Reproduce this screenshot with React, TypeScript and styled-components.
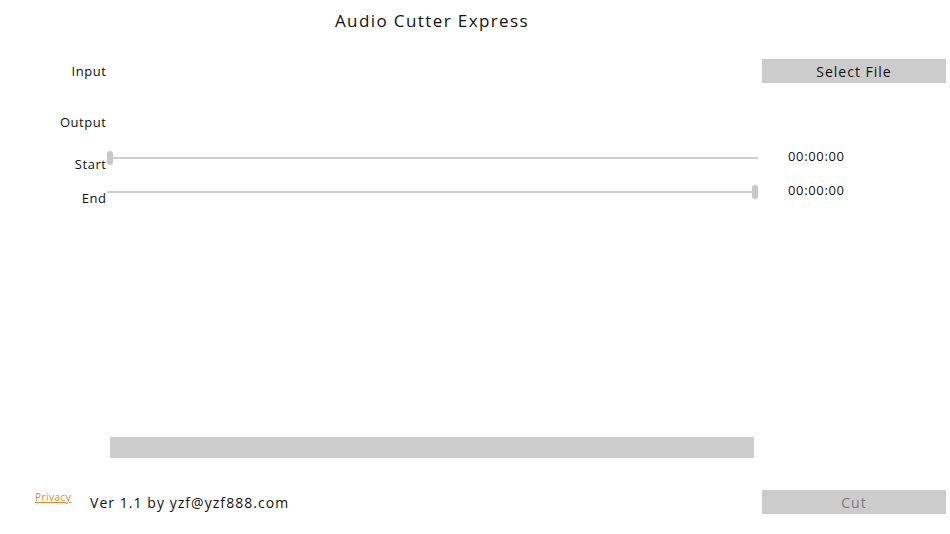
import React from "react";
import styled, { createGlobalStyle } from "styled-components";

const Global = createGlobalStyle`
  html, body { margin: 0; padding: 0; background: #ffffff; }
  body { font-family: "Open Sans", "Noto Sans", sans-serif; color: #111; }
`;

const Page = styled.div`
  width: 950px;
  height: 534px;
  display: flex;
  flex-direction: column;
  box-sizing: border-box;
  position: relative;
`;

const Title = styled.h1`
  margin: 0;
  height: 44px;
  line-height: 42px;
  text-align: center;
  font-size: 17px;
  font-weight: 400;
  letter-spacing: 1.4px;
  padding-right: 86px;
`;

const Form = styled.div`
  display: flex;
  flex-direction: column;
  margin-top: 15px;
`;

const Row = styled.div<{ $top?: number }>`
  display: grid;
  grid-template-columns: 106px 652px 188px;
  height: 24px;
  margin-top: ${(p) => p.$top ?? 0}px;
  align-items: center;
`;

const Label = styled.div<{ $drop?: number }>`
  text-align: right;
  font-size: 13px;
  line-height: 16px;
  letter-spacing: 0.55px;
  margin-right: -0.5px;
  transform: translateY(${(p) => p.$drop ?? 0}px);
`;

const Button = styled.button<{ $disabled?: boolean }>`
  grid-column: 3;
  margin-left: 4px;
  height: 24px;
  border: none;
  background: #cccccc;
  font-family: inherit;
  font-size: 14px;
  letter-spacing: 1px;
  color: ${(p) => (p.$disabled ? "#7a7a7a" : "#111")};
  padding: 0;
  cursor: default;
`;

const Slider = styled.div`
  position: relative;
  height: 24px;
  display: flex;
  align-items: center;
  margin-left: 1px;
`;

const Track = styled.div`
  flex: 1;
  height: 2px;
  background: #cfcfcf;
`;

const Thumb = styled.div<{ $pos: "start" | "end" }>`
  position: absolute;
  top: 5px;
  ${(p) => (p.$pos === "start" ? "left: 0px;" : "right: 0px;")}
  width: 6px;
  height: 14px;
  border-radius: 3px;
  background: #c8c8c8;
`;

const Time = styled.div`
  padding-left: 30px;
  font-size: 13px;
  letter-spacing: 0.65px;
  transform: translateY(-2px);
`;

const Spacer = styled.div`
  flex: 1;
`;

const Progress = styled.div`
  margin-left: 110px;
  width: 644px;
  height: 21px;
  background: #cccccc;
`;

const Footer = styled.div`
  display: flex;
  align-items: center;
  height: 24px;
  margin-top: 32px;
  margin-bottom: 20px;
  padding-left: 35px;
`;

const Privacy = styled.a`
  font-size: 10px;
  color: #d4892e;
  letter-spacing: 0.45px;
  text-decoration: underline;
  transform: translateY(-5px);
  width: 55px;
`;

const Version = styled.div`
  font-size: 14px;
  letter-spacing: 1.05px;
  flex: 1;
`;

const CutButton = styled(Button)`
  width: 184px;
  margin-right: 4px;
`;

export default function App() {
  return (
    <Page>
      <Global />
      <Title>Audio Cutter Express</Title>
      <Form>
        <Row>
          <Label>Input</Label>
          <div />
          <Button>Select File</Button>
        </Row>
        <Row $top={27}>
          <Label>Output</Label>
        </Row>
        <Row $top={12}>
          <Label $drop={6}>Start</Label>
          <Slider>
            <Track />
            <Thumb $pos="start" />
          </Slider>
          <Time>00:00:00</Time>
        </Row>
        <Row $top={10}>
          <Label $drop={6}>End</Label>
          <Slider>
            <Track />
            <Thumb $pos="end" />
          </Slider>
          <Time>00:00:00</Time>
        </Row>
      </Form>
      <Spacer />
      <Progress />
      <Footer>
        <Privacy>Privacy</Privacy>
        <Version>Ver 1.1 by yzf@yzf888.com</Version>
        <CutButton $disabled>Cut</CutButton>
      </Footer>
    </Page>
  );
}
